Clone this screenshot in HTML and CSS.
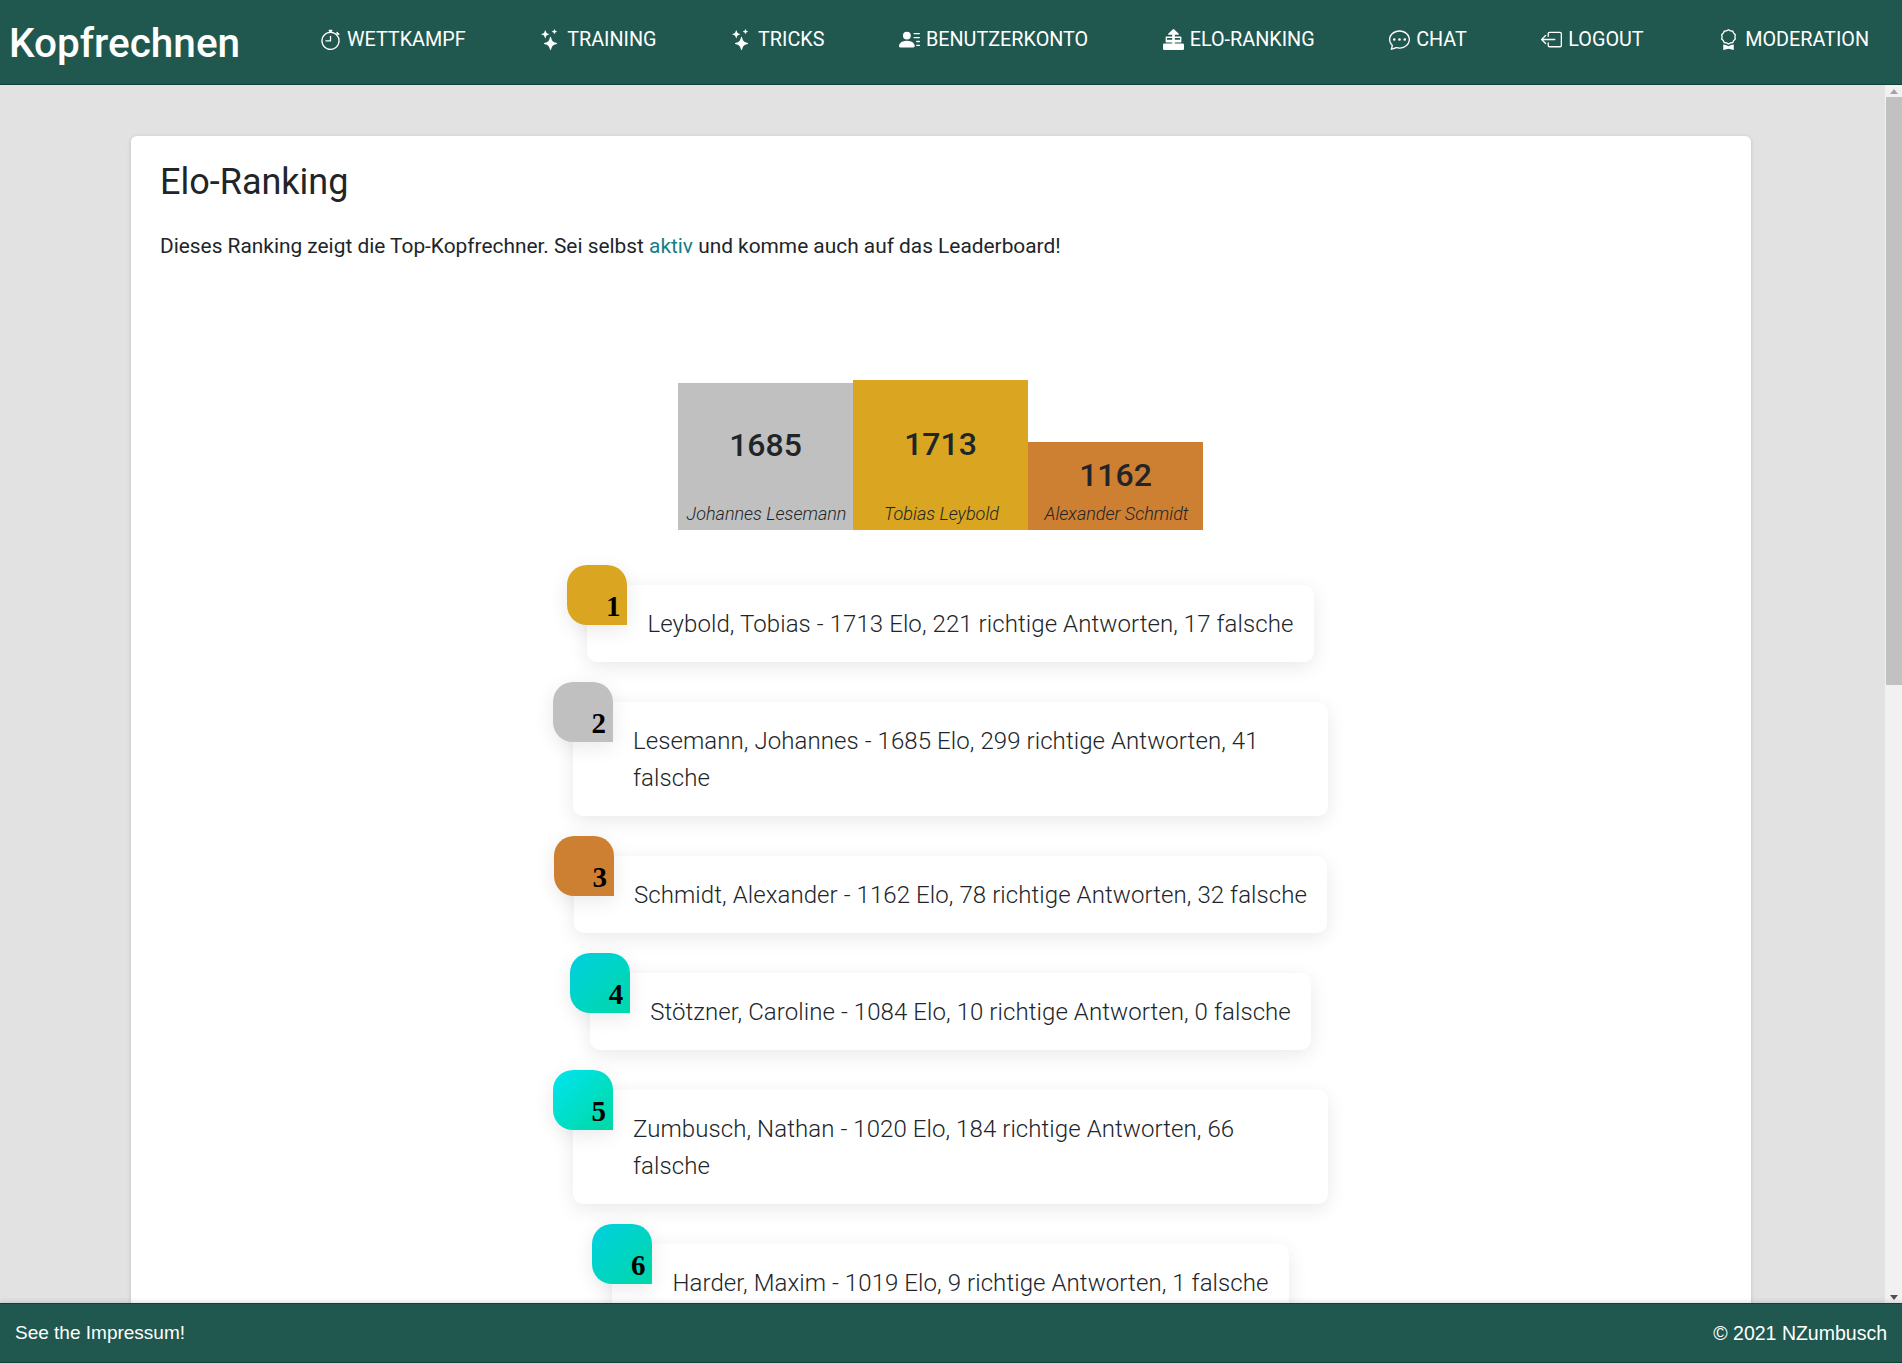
FILE: index.html
```html
<!DOCTYPE html>
<html lang="de">
<head>
    <meta charset="UTF-8">
    <meta name="viewport" content="width=device-width, initial-scale=1.0">
    <title>Kopfrechnen - Elo-Ranking</title>
    <link rel="stylesheet" href="styles.css">
</head>
<body>
    <header class="topbar">
        <a class="brand" href="#">Kopfrechnen</a>
        <nav class="nav">
            <a class="nav-link" href="#">
                <svg class="icon" viewBox="0 0 16 16" fill="currentColor"><path d="M8.5 5.6a.5.5 0 1 0-1 0v2.9h-3a.5.5 0 0 0 0 1H8a.5.5 0 0 0 .5-.5V5.6z"/><path d="M6.5 1A.5.5 0 0 1 7 .5h2a.5.5 0 0 1 0 1v.57c1.36.196 2.594.78 3.584 1.64a.715.715 0 0 1 .012-.013l.354-.354-.354-.353a.5.5 0 0 1 .707-.708l1.414 1.415a.5.5 0 1 1-.707.707l-.353-.354-.354.354a.512.512 0 0 1-.013.012A7 7 0 1 1 7 2.071V1.5a.5.5 0 0 1-.5-.5zM8 3a6 6 0 1 0 .001 12A6 6 0 0 0 8 3z"/></svg>
                WETTKAMPF</a>
            <a class="nav-link" href="#">
                <svg class="icon" viewBox="0 0 16 16" fill="currentColor"><path d="M7.657 6.247c.11-.33.576-.33.686 0l.645 1.937a2.89 2.89 0 0 0 1.829 1.828l1.936.645c.33.11.33.576 0 .686l-1.937.645a2.89 2.89 0 0 0-1.828 1.829l-.645 1.936a.361.361 0 0 1-.686 0l-.645-1.937a2.89 2.89 0 0 0-1.828-1.828l-1.937-.645a.361.361 0 0 1 0-.686l1.937-.645a2.89 2.89 0 0 0 1.828-1.828l.645-1.937zM3.794 1.148a.217.217 0 0 1 .412 0l.387 1.162c.173.518.579.924 1.097 1.097l1.162.387a.217.217 0 0 1 0 .412l-1.162.387A1.734 1.734 0 0 0 4.593 5.69l-.387 1.162a.217.217 0 0 1-.412 0L3.407 5.69A1.734 1.734 0 0 0 2.31 4.593l-1.162-.387a.217.217 0 0 1 0-.412l1.162-.387A1.734 1.734 0 0 0 3.407 2.31l.387-1.162zM10.863.099a.145.145 0 0 1 .274 0l.258.774c.115.346.386.617.732.732l.774.258a.145.145 0 0 1 0 .274l-.774.258a1.156 1.156 0 0 0-.732.732l-.258.774a.145.145 0 0 1-.274 0l-.258-.774a1.156 1.156 0 0 0-.732-.732L9.1 2.137a.145.145 0 0 1 0-.274l.774-.258c.346-.115.617-.386.732-.732L10.863.1z"/></svg>
                TRAINING</a>
            <a class="nav-link" href="#">
                <svg class="icon" viewBox="0 0 16 16" fill="currentColor"><path d="M7.657 6.247c.11-.33.576-.33.686 0l.645 1.937a2.89 2.89 0 0 0 1.829 1.828l1.936.645c.33.11.33.576 0 .686l-1.937.645a2.89 2.89 0 0 0-1.828 1.829l-.645 1.936a.361.361 0 0 1-.686 0l-.645-1.937a2.89 2.89 0 0 0-1.828-1.828l-1.937-.645a.361.361 0 0 1 0-.686l1.937-.645a2.89 2.89 0 0 0 1.828-1.828l.645-1.937zM3.794 1.148a.217.217 0 0 1 .412 0l.387 1.162c.173.518.579.924 1.097 1.097l1.162.387a.217.217 0 0 1 0 .412l-1.162.387A1.734 1.734 0 0 0 4.593 5.69l-.387 1.162a.217.217 0 0 1-.412 0L3.407 5.69A1.734 1.734 0 0 0 2.31 4.593l-1.162-.387a.217.217 0 0 1 0-.412l1.162-.387A1.734 1.734 0 0 0 3.407 2.31l.387-1.162zM10.863.099a.145.145 0 0 1 .274 0l.258.774c.115.346.386.617.732.732l.774.258a.145.145 0 0 1 0 .274l-.774.258a1.156 1.156 0 0 0-.732.732l-.258.774a.145.145 0 0 1-.274 0l-.258-.774a1.156 1.156 0 0 0-.732-.732L9.1 2.137a.145.145 0 0 1 0-.274l.774-.258c.346-.115.617-.386.732-.732L10.863.1z"/></svg>
                TRICKS</a>
            <a class="nav-link" href="#">
                <svg class="icon" viewBox="0 0 16 16" fill="currentColor"><path d="M6 8a3 3 0 1 0 0-6 3 3 0 0 0 0 6zm-5 6s-1 0-1-1 1-4 6-4 6 3 6 4-1 1-1 1H1zM11 3.5a.5.5 0 0 1 .5-.5h4a.5.5 0 0 1 0 1h-4a.5.5 0 0 1-.5-.5zm.5 2.5a.5.5 0 0 0 0 1h4a.5.5 0 0 0 0-1h-4zm2 3a.5.5 0 0 0 0 1h2a.5.5 0 0 0 0-1h-2zm0 3a.5.5 0 0 0 0 1h2a.5.5 0 0 0 0-1h-2z"/></svg>
                BENUTZERKONTO</a>
            <a class="nav-link" href="#">
                <svg class="icon" viewBox="0 0 16 16" fill="currentColor"><path d="M7.400.3 4 3.700a.4.4 0 0 0 .3.7H7v1.400H2.500a.5.5 0 0 0-.5.5v3.400a.5.5 0 0 0 .5.5H7V11H1a1 1 0 0 0-1 1v3a1 1 0 0 0 1 1h14a1 1 0 0 0 1-1v-3a1 1 0 0 0-1-1H9v-.8h4.500a.5.5 0 0 0 .5-.5V6.300a.5.5 0 0 0-.5-.5H9V4.400h2.700a.4.4 0 0 0 .3-.7L8.600.3a.85.85 0 0 0-1.200 0zM3 6.800h4v1.400H3V6.800zm6 0h4v1.400H9V6.800z"/></svg>
                ELO-RANKING</a>
            <a class="nav-link" href="#">
                <svg class="icon" viewBox="0 0 16 16" fill="currentColor"><path d="M5 8a1 1 0 1 1-2 0 1 1 0 0 1 2 0zm4 0a1 1 0 1 1-2 0 1 1 0 0 1 2 0zm3 1a1 1 0 1 0 0-2 1 1 0 0 0 0 2z"/><path d="m2.165 15.803.02-.004c1.83-.363 2.948-.842 3.468-1.105A9.06 9.06 0 0 0 8 15c4.418 0 8-3.134 8-7s-3.582-7-8-7-8 3.134-8 7c0 1.76.743 3.37 1.97 4.6a10.437 10.437 0 0 1-.524 2.318l-.003.011a10.722 10.722 0 0 1-.244.637c-.079.186.074.394.273.362a21.673 21.673 0 0 0 .693-.125zm.8-3.108a1 1 0 0 0-.287-.801C1.618 10.83 1 9.468 1 8c0-3.192 3.004-6 7-6s7 2.808 7 6c0 3.193-3.004 6-7 6a8.06 8.06 0 0 1-2.088-.272 1 1 0 0 0-.711.074c-.387.196-1.24.57-2.634.893a10.97 10.97 0 0 0 .398-2z"/></svg>
                CHAT</a>
            <a class="nav-link" href="#">
                <svg class="icon" viewBox="0 0 16 16" fill="currentColor"><path fill-rule="evenodd" d="M6 12.500a.5.5 0 0 0 .5.5h8a.5.5 0 0 0 .5-.5v-9a.5.5 0 0 0-.5-.5h-8a.5.5 0 0 0-.5.5v2a.5.5 0 0 1-1 0v-2A1.500 1.500 0 0 1 6.500 2h8A1.500 1.500 0 0 1 16 3.500v9a1.500 1.500 0 0 1-1.500 1.500h-8A1.500 1.500 0 0 1 5 12.500v-2a.5.5 0 0 1 1 0v2z"/><path fill-rule="evenodd" d="M.146 8.354a.5.5 0 0 1 0-.708l3-3a.5.5 0 1 1 .708.708L1.707 7.500H10.500a.5.5 0 0 1 0 1H1.707l2.147 2.146a.5.5 0 0 1-.708.708l-3-3z"/></svg>
                LOGOUT</a>
            <a class="nav-link" href="#">
                <svg class="icon" viewBox="0 0 16 16" fill="currentColor"><path d="M9.669.864 8 0 6.331.864l-1.858.282-.842 1.68-1.337 1.32L2.6 6l-.306 1.854 1.337 1.32.842 1.68 1.858.282L8 12l1.669-.864 1.858-.282.842-1.68 1.337-1.32L13.400 6l.306-1.854-1.337-1.32-.842-1.68L9.669.864zm1.196 1.193.684 1.365 1.086 1.072L12.387 6l.248 1.506-1.086 1.072-.684 1.365-1.51.229L8 10.874l-1.355-.702-1.51-.229-.684-1.365-1.086-1.072L3.614 6l-.25-1.506 1.087-1.072.684-1.365 1.51-.229L8 1.126l1.356.702 1.509.229z"/><path d="M4 11.794V16l4-1 4 1v-4.206l-2.018.306L8 13.126 6.018 12.100 4 11.794z"/></svg>
                MODERATION</a>
        </nav>
    </header>

    <div class="middle">
        <main class="scroller">
            <section class="card">
                <h1 class="title">Elo-Ranking</h1>
                <p class="intro">Dieses Ranking zeigt die Top-Kopfrechner. Sei selbst <a href="#">aktiv</a> und komme auch auf das Leaderboard!</p>

                <div class="podium">
                    <div class="step step-silver">
                        <div class="step-elo">1685</div>
                        <div class="step-name">Johannes Lesemann</div>
                    </div>
                    <div class="step step-gold">
                        <div class="step-elo">1713</div>
                        <div class="step-name">Tobias Leybold</div>
                    </div>
                    <div class="step step-bronze">
                        <div class="step-elo">1162</div>
                        <div class="step-name">Alexander Schmidt</div>
                    </div>
                </div>

                <ol class="ranking">
                    <li class="rank"><span class="badge badge-gold">1</span>Leybold, Tobias - 1713 Elo, 221 richtige Antworten, 17 falsche</li>
                    <li class="rank"><span class="badge badge-silver">2</span>Lesemann, Johannes - 1685 Elo, 299 richtige Antworten, 41 falsche</li>
                    <li class="rank"><span class="badge badge-bronze">3</span>Schmidt, Alexander - 1162 Elo, 78 richtige Antworten, 32 falsche</li>
                    <li class="rank"><span class="badge badge-teal">4</span>Stötzner, Caroline - 1084 Elo, 10 richtige Antworten, 0 falsche</li>
                    <li class="rank"><span class="badge badge-teal-light">5</span>Zumbusch, Nathan - 1020 Elo, 184 richtige Antworten, 66 falsche</li>
                    <li class="rank"><span class="badge badge-teal">6</span>Harder, Maxim - 1019 Elo, 9 richtige Antworten, 1 falsche</li>
                </ol>
            </section>
        </main>

        <div class="scrollbar" aria-hidden="true">
            <div class="scroll-btn"><span class="arrow-up"></span></div>
            <div class="scroll-track"><div class="scroll-thumb"></div></div>
            <div class="scroll-btn"><span class="arrow-down"></span></div>
        </div>
    </div>

    <footer class="footer">
        <a href="#">See the Impressum!</a>
        <span class="copyright">© 2021 NZumbusch</span>
    </footer>
</body>
</html>
```

FILE: styles.css
```css
:root {
    --green: #20584f;
    --green-dark: #0f4237;
    --text: #212529;
}

* {
    box-sizing: border-box;
}

html, body {
    height: 100%;
}

body {
    margin: 0;
    display: flex;
    flex-direction: column;
    overflow: hidden;
    background-color: #e2e2e2;
    color: var(--text);
    font-family: "Roboto", "Liberation Sans", sans-serif;
}

a {
    color: inherit;
    text-decoration: none;
}

/* top bar */
.topbar {
    display: flex;
    align-items: center;
    justify-content: space-between;
    height: 85px;
    flex: none;
    padding: 2px 33px 0 9px;
    background-color: var(--green);
    border-bottom: 1px solid var(--green-dark);
    color: #fff;
}

.brand {
    font-weight: 500;
    font-size: 40.5px;
}

.nav {
    display: flex;
    align-items: center;
    gap: 74.5px;
    margin-bottom: 8px;
}

.nav-link {
    display: flex;
    align-items: center;
    gap: 6px;
    font-size: 19.8px;
}

.icon {
    width: 21px;
    height: 21px;
    flex: none;
}

/* middle part with the fake scrollbar */
.middle {
    display: flex;
    flex: 1;
    min-height: 0;
}

.scroller {
    flex: 1;
    min-width: 0;
    overflow: hidden;
    padding-top: 51px;
}

.scrollbar {
    display: flex;
    flex-direction: column;
    flex: none;
    width: 17px;
    background-color: #f1f1f1;
}

.scroll-btn {
    display: flex;
    align-items: center;
    justify-content: center;
    flex: none;
    height: 12px;
}

.arrow-up {
    border-left: 4.5px solid transparent;
    border-right: 4.5px solid transparent;
    border-bottom: 5px solid #a3a3a3;
}

.arrow-down {
    border-left: 4.5px solid transparent;
    border-right: 4.5px solid transparent;
    border-top: 5px solid #505050;
}

.scroll-track {
    flex: 1;
}

.scroll-thumb {
    height: 588px;
    margin-left: 1px;
    background-color: #c1c1c1;
}

/* card */
.card {
    width: 1620px;
    min-height: 2350px;
    margin: 0 0 51px 131px;
    padding: 24px 30px 30px 29px;
    background-color: #fff;
    border-radius: 6px;
    box-shadow: 0 1px 4px rgba(0, 0, 0, .15);
}

.title {
    margin: 0;
    font-size: 36px;
    font-weight: 400;
    line-height: 44px;
}

.intro {
    margin: 27px 0 0;
    font-size: 20.86px;
    line-height: 30px;
}

.intro a {
    color: #167c8a;
}

/* podium */
.podium {
    display: flex;
    align-items: flex-end;
    justify-content: center;
    height: 150px;
    margin-top: 119px;
}

.step {
    display: flex;
    flex-direction: column;
    width: 175px;
    padding-bottom: 4px;
    text-align: center;
}

.step-silver {
    height: 147px;
    background-color: #c0c0c0;
}

.step-gold {
    height: 150px;
    background-color: #daa520;
}

.step-bronze {
    height: 88px;
    background-color: #cd7f32;
}

.step-elo {
    flex: 1;
    display: flex;
    align-items: center;
    justify-content: center;
    padding-top: 5px;
    font-size: 32px;
    font-weight: 500;
}

.step-name {
    padding-left: 2px;
    font-size: 18px;
    font-style: italic;
    font-weight: 300;
    line-height: 24px;
    white-space: nowrap;
}

/* list */
.ranking {
    display: flex;
    flex-direction: column;
    align-items: center;
    gap: 40px;
    margin: 55px 0 0;
    padding: 0 0 0 20px;
    list-style: none;
}

.rank {
    position: relative;
    max-width: 755px;
    padding: 21px 20px 19px 60px;
    background-color: #fff;
    border-radius: 10px;
    box-shadow: 0 5px 20px rgba(0, 0, 0, .09);
    font-size: 24px;
    font-weight: 300;
    letter-spacing: .08px;
    line-height: 37px;
}

.badge {
    position: absolute;
    top: -20px;
    left: -20px;
    display: flex;
    align-items: flex-end;
    justify-content: flex-end;
    width: 60px;
    height: 60px;
    padding: 0 7px 1px 0;
    border-radius: 20px 20px 0 20px;
    box-shadow: 0 5px 20px rgba(0, 0, 0, .09);
    color: #000;
    font-family: "Liberation Serif", serif;
    font-size: 29px;
    font-weight: 700;
    letter-spacing: 0;
    line-height: 36px;
}

.badge-gold {
    background: #daa520;
}

.badge-silver {
    background: #c0c0c0;
}

.badge-bronze {
    background: #cd7f32;
}

.badge-teal {
    background: linear-gradient(135deg, #00d0e0, #00d8a8);
}

.badge-teal-light {
    background: linear-gradient(135deg, #00e5f2, #00d8a0);
}

/* footer */
.footer {
    position: relative;
    display: flex;
    align-items: center;
    justify-content: space-between;
    flex: none;
    height: 60px;
    padding: 0 15px;
    background-color: var(--green);
    border-top: 1px solid var(--green-dark);
    border-bottom: 1px solid var(--green-dark);
    box-shadow: 0 -2px 4px rgba(0, 0, 0, .1);
    color: #fff;
    font-family: "Liberation Sans", sans-serif;
    font-size: 19px;
}

.copyright {
    font-size: 19.5px;
}
```
